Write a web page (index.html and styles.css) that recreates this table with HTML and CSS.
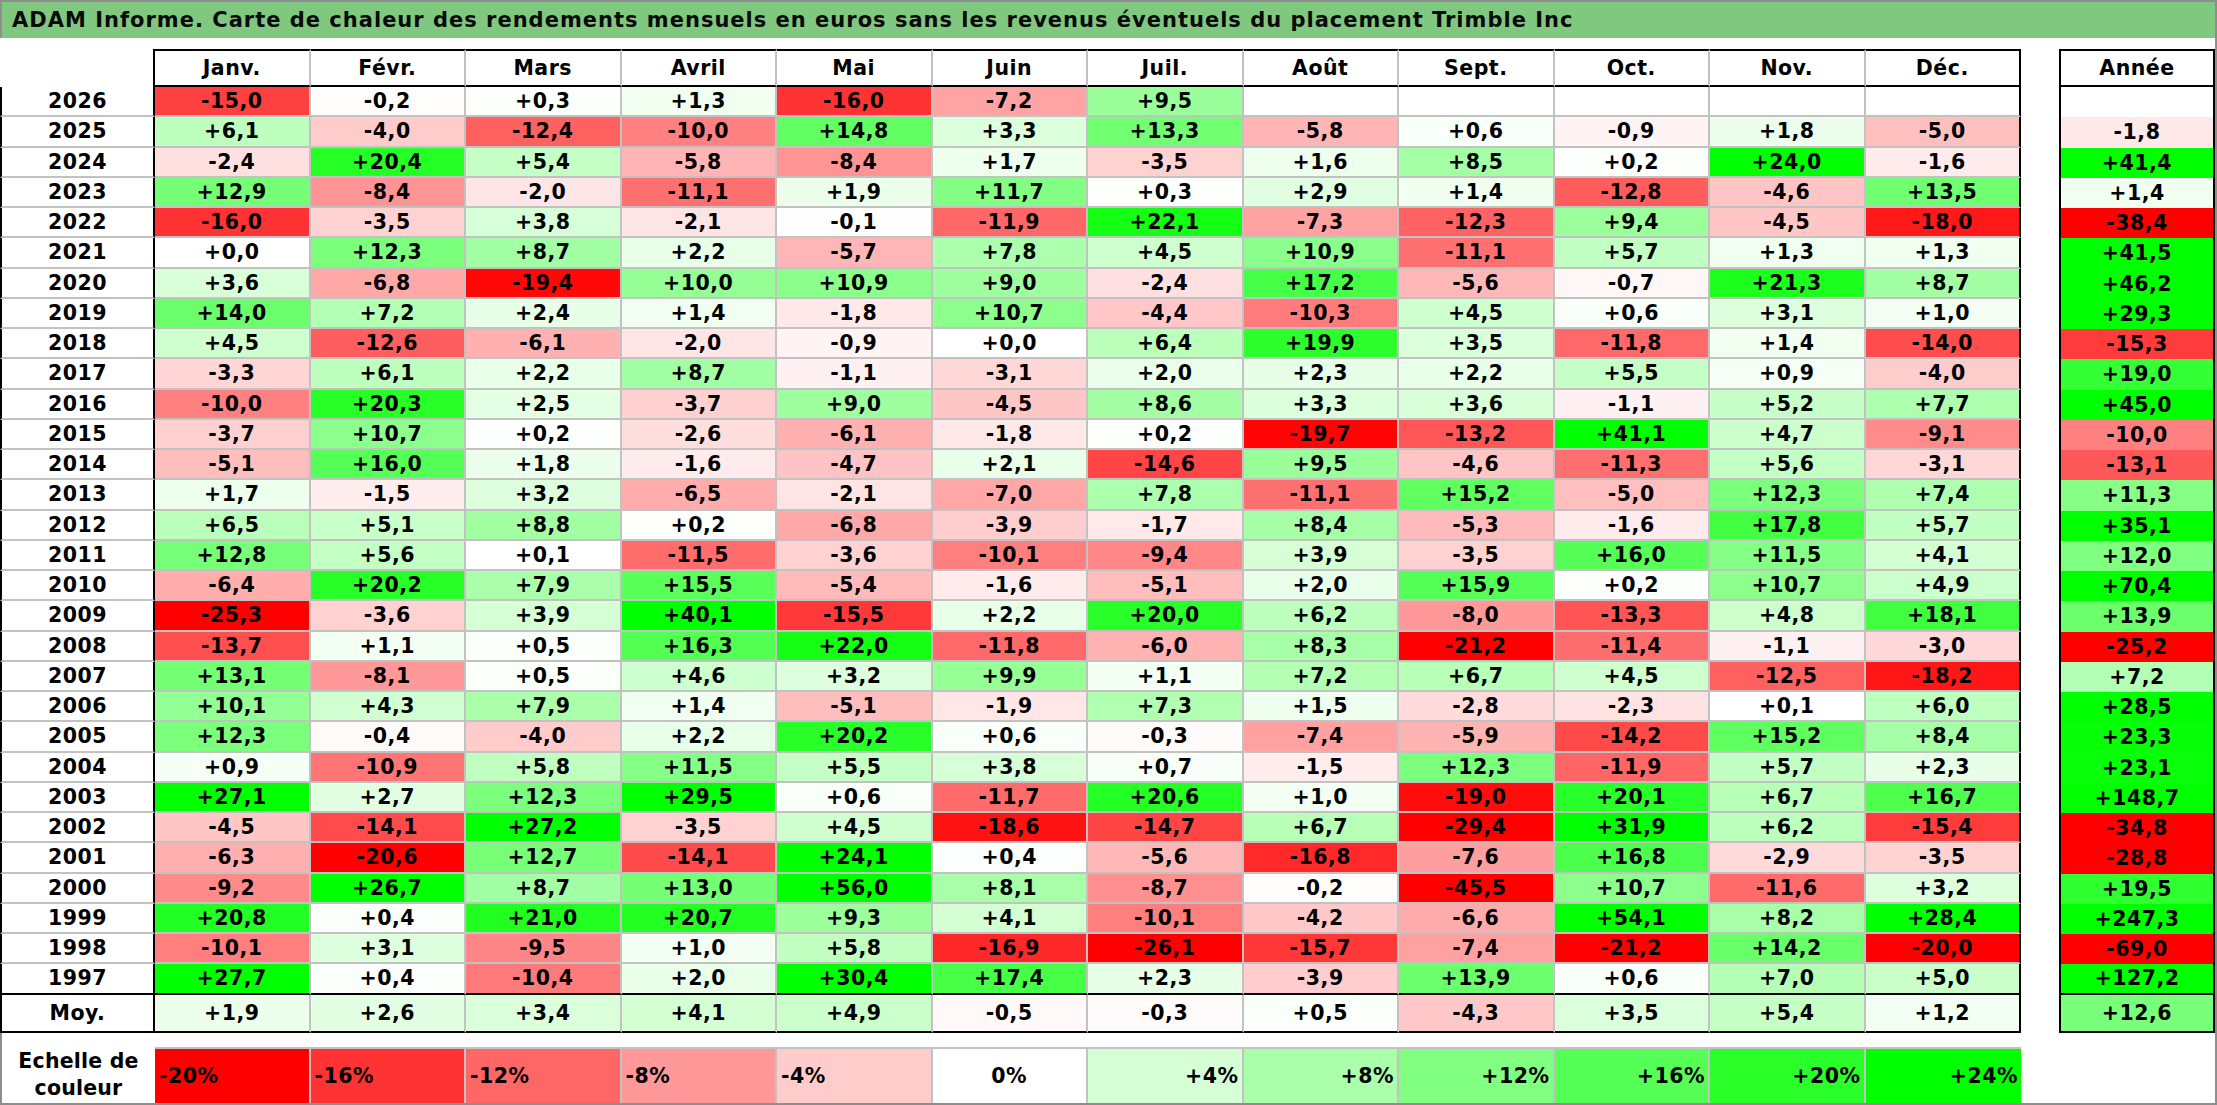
FILE: index.html
```html
<!DOCTYPE html>
<html lang="fr">
<head>
<meta charset="utf-8">
<title>ADAM Informe - Trimble Inc</title>
<link rel="stylesheet" href="styles.css">
</head>
<body>
<div class="sheet">
  <div class="title">ADAM Informe. Carte de chaleur des rendements mensuels en euros sans les revenus éventuels du placement Trimble Inc</div>
  <table class="heat">
    <colgroup>
      <col class="c-year">
      <col class="c-month" span="12">
      <col class="c-gap">
      <col class="c-total">
    </colgroup>
    <thead>
      <tr class="r-head">
        <th class="corner"></th>
        <th class="mh">Janv.</th>
        <th class="mh">Févr.</th>
        <th class="mh">Mars</th>
        <th class="mh">Avril</th>
        <th class="mh">Mai</th>
        <th class="mh">Juin</th>
        <th class="mh">Juil.</th>
        <th class="mh">Août</th>
        <th class="mh">Sept.</th>
        <th class="mh">Oct.</th>
        <th class="mh">Nov.</th>
        <th class="mh dec">Déc.</th>
        <th class="gap"></th>
        <th class="th-total">Année</th>
      </tr>
    </thead>
    <tbody id="rows"></tbody>
  </table>
</div>
<script src="script.js"></script>
</body>
</html>
```
FILE: styles.css
```css
* {
  box-sizing: border-box;
}

body {
  margin: 0;
  background: #ffffff;
}

.sheet {
  width: 2217px;
  height: 1105px;
  border: 2px solid #8e8e8e;
  border-left: 0;
  overflow: hidden;
  font-family: "DejaVu Sans", "Noto Sans", sans-serif;
  font-weight: bold;
  color: #000000;
  background: #ffffff;
}

.title {
  height: 36px;
  background: #80c880;
  border-left: 2px solid #8e8e8e;
  padding-left: 10px;
  font-size: 21px;
  letter-spacing: 1px;
  line-height: 36px;
  white-space: nowrap;
  color: #0a0a0a;
}

.heat {
  margin-top: 11px;
  border-collapse: separate;
  border-spacing: 0;
  table-layout: fixed;
  width: 2215px;
  font-size: 20.5px;
  letter-spacing: 0.5px;
}

.c-year { width: 155px; }
.c-month { width: 155.5px; }
.c-gap { width: 38px; }
.c-total { width: 156px; }

.heat th,
.heat td {
  padding: 0;
  text-align: center;
  vertical-align: middle;
  white-space: nowrap;
  overflow: hidden;
  font-weight: bold;
}

.r-head { height: 38px; }
.r-data { height: 30.25px; }
.r-moy { height: 38px; }
.r-space { height: 14px; }
.r-scale { height: 56.5px; }

/* header */
.corner {
  border-right: 2px solid #000;
}
.mh {
  border-top: 2px solid #000;
  border-bottom: 2px solid #000;
  border-right: 2px solid #c2c2c2;
}
.mh.dec {
  border-right: 2px solid #000;
}
.th-total {
  border: 2px solid #000;
}

/* body cells */
.yr {
  border-left: 2px solid #000;
  border-right: 2px solid #000;
  border-bottom: 2px solid #c2c2c2;
  background: #ffffff;
}
.mo {
  border-right: 2px solid #c2c2c2;
  border-bottom: 2px solid #c2c2c2;
  background: #ffffff;
}
.mo.dec {
  border-right: 2px solid #000;
}
.tot {
  border-left: 2px solid #000;
  border-right: 2px solid #000;
  background: #ffffff;
}

.r-last .yr,
.r-last .mo,
.r-last .tot {
  border-bottom: 2px solid #000;
}

.r-moy .yr,
.r-moy .mo,
.r-moy .tot {
  border-bottom: 2px solid #000;
}

/* scale */
.frame-l {
  border-left: 2px solid #8e8e8e;
}
.scale-label {
  border-left: 2px solid #8e8e8e;
  line-height: 27px;
  letter-spacing: 0.2px;
}
.sc {
  border-top: 2px solid #c2c2c2;
  border-right: 2px solid #c2c2c2;
}
.sc.last {
  border-right: 0;
}
.heat td.sc-neg {
  text-align: left;
  padding-left: 4px;
}
.heat td.sc-pos {
  text-align: right;
  padding-right: 3px;
}
```
FILE: script.js
```js
var DATA = [
  "2026|-15,0 -0,2 +0,3 +1,3 -16,0 -7,2 +9,5 . . . . .|.",
  "2025|+6,1 -4,0 -12,4 -10,0 +14,8 +3,3 +13,3 -5,8 +0,6 -0,9 +1,8 -5,0|-1,8",
  "2024|-2,4 +20,4 +5,4 -5,8 -8,4 +1,7 -3,5 +1,6 +8,5 +0,2 +24,0 -1,6|+41,4",
  "2023|+12,9 -8,4 -2,0 -11,1 +1,9 +11,7 +0,3 +2,9 +1,4 -12,8 -4,6 +13,5|+1,4",
  "2022|-16,0 -3,5 +3,8 -2,1 -0,1 -11,9 +22,1 -7,3 -12,3 +9,4 -4,5 -18,0|-38,4",
  "2021|+0,0 +12,3 +8,7 +2,2 -5,7 +7,8 +4,5 +10,9 -11,1 +5,7 +1,3 +1,3|+41,5",
  "2020|+3,6 -6,8 -19,4 +10,0 +10,9 +9,0 -2,4 +17,2 -5,6 -0,7 +21,3 +8,7|+46,2",
  "2019|+14,0 +7,2 +2,4 +1,4 -1,8 +10,7 -4,4 -10,3 +4,5 +0,6 +3,1 +1,0|+29,3",
  "2018|+4,5 -12,6 -6,1 -2,0 -0,9 +0,0 +6,4 +19,9 +3,5 -11,8 +1,4 -14,0|-15,3",
  "2017|-3,3 +6,1 +2,2 +8,7 -1,1 -3,1 +2,0 +2,3 +2,2 +5,5 +0,9 -4,0|+19,0",
  "2016|-10,0 +20,3 +2,5 -3,7 +9,0 -4,5 +8,6 +3,3 +3,6 -1,1 +5,2 +7,7|+45,0",
  "2015|-3,7 +10,7 +0,2 -2,6 -6,1 -1,8 +0,2 -19,7 -13,2 +41,1 +4,7 -9,1|-10,0",
  "2014|-5,1 +16,0 +1,8 -1,6 -4,7 +2,1 -14,6 +9,5 -4,6 -11,3 +5,6 -3,1|-13,1",
  "2013|+1,7 -1,5 +3,2 -6,5 -2,1 -7,0 +7,8 -11,1 +15,2 -5,0 +12,3 +7,4|+11,3",
  "2012|+6,5 +5,1 +8,8 +0,2 -6,8 -3,9 -1,7 +8,4 -5,3 -1,6 +17,8 +5,7|+35,1",
  "2011|+12,8 +5,6 +0,1 -11,5 -3,6 -10,1 -9,4 +3,9 -3,5 +16,0 +11,5 +4,1|+12,0",
  "2010|-6,4 +20,2 +7,9 +15,5 -5,4 -1,6 -5,1 +2,0 +15,9 +0,2 +10,7 +4,9|+70,4",
  "2009|-25,3 -3,6 +3,9 +40,1 -15,5 +2,2 +20,0 +6,2 -8,0 -13,3 +4,8 +18,1|+13,9",
  "2008|-13,7 +1,1 +0,5 +16,3 +22,0 -11,8 -6,0 +8,3 -21,2 -11,4 -1,1 -3,0|-25,2",
  "2007|+13,1 -8,1 +0,5 +4,6 +3,2 +9,9 +1,1 +7,2 +6,7 +4,5 -12,5 -18,2|+7,2",
  "2006|+10,1 +4,3 +7,9 +1,4 -5,1 -1,9 +7,3 +1,5 -2,8 -2,3 +0,1 +6,0|+28,5",
  "2005|+12,3 -0,4 -4,0 +2,2 +20,2 +0,6 -0,3 -7,4 -5,9 -14,2 +15,2 +8,4|+23,3",
  "2004|+0,9 -10,9 +5,8 +11,5 +5,5 +3,8 +0,7 -1,5 +12,3 -11,9 +5,7 +2,3|+23,1",
  "2003|+27,1 +2,7 +12,3 +29,5 +0,6 -11,7 +20,6 +1,0 -19,0 +20,1 +6,7 +16,7|+148,7",
  "2002|-4,5 -14,1 +27,2 -3,5 +4,5 -18,6 -14,7 +6,7 -29,4 +31,9 +6,2 -15,4|-34,8",
  "2001|-6,3 -20,6 +12,7 -14,1 +24,1 +0,4 -5,6 -16,8 -7,6 +16,8 -2,9 -3,5|-28,8",
  "2000|-9,2 +26,7 +8,7 +13,0 +56,0 +8,1 -8,7 -0,2 -45,5 +10,7 -11,6 +3,2|+19,5",
  "1999|+20,8 +0,4 +21,0 +20,7 +9,3 +4,1 -10,1 -4,2 -6,6 +54,1 +8,2 +28,4|+247,3",
  "1998|-10,1 +3,1 -9,5 +1,0 +5,8 -16,9 -26,1 -15,7 -7,4 -21,2 +14,2 -20,0|-69,0",
  "1997|+27,7 +0,4 -10,4 +2,0 +30,4 +17,4 +2,3 -3,9 +13,9 +0,6 +7,0 +5,0|+127,2"
];
var MOY = "Moy.|+1,9 +2,6 +3,4 +4,1 +4,9 -0,5 -0,3 +0,5 -4,3 +3,5 +5,4 +1,2|+12,6";

function colour(v) {
  var t, c;
  if (v < 0) {
    t = Math.min(1, -v / 20);
    c = Math.round(255 * (1 - t));
    return "rgb(255," + c + "," + c + ")";
  }
  t = Math.min(1, v / 24);
  c = Math.round(255 * (1 - t));
  return "rgb(" + c + ",255," + c + ")";
}

function num(s) {
  return parseFloat(s.replace(",", "."));
}

function cell(tr, cls, text, value) {
  var td = document.createElement("td");
  td.className = cls;
  if (text !== null) {
    td.textContent = text;
  }
  if (value !== null) {
    td.style.background = colour(value);
  }
  tr.appendChild(td);
  return td;
}

function buildRow(line, rowClass) {
  var parts = line.split("|");
  var tr = document.createElement("tr");
  tr.className = rowClass;
  cell(tr, "yr", parts[0], null);
  var vals = parts[1].split(" ");
  for (var i = 0; i < 12; i++) {
    var s = vals[i];
    var cls = "mo" + (i === 11 ? " dec" : "");
    if (s === ".") {
      cell(tr, cls, null, null);
    } else {
      cell(tr, cls, s, num(s));
    }
  }
  cell(tr, "gap", null, null);
  if (parts[2] === ".") {
    cell(tr, "tot", null, null);
  } else {
    cell(tr, "tot", parts[2], num(parts[2]));
  }
  return tr;
}

var body = document.getElementById("rows");
for (var r = 0; r < DATA.length; r++) {
  body.appendChild(buildRow(DATA[r], "r-data" + (r === DATA.length - 1 ? " r-last" : "")));
}
body.appendChild(buildRow(MOY, "r-moy"));

var sp = document.createElement("tr");
sp.className = "r-space";
cell(sp, "frame-l", null, null);
var rest = cell(sp, "", null, null);
rest.colSpan = 14;
body.appendChild(sp);

var sc = document.createElement("tr");
sc.className = "r-scale";
var lab = cell(sc, "scale-label", null, null);
lab.appendChild(document.createTextNode("Echelle de"));
lab.appendChild(document.createElement("br"));
lab.appendChild(document.createTextNode("couleur"));
for (var k = 0; k < 12; k++) {
  var v = -20 + 4 * k;
  var label = (v > 0 ? "+" : "") + v + "%";
  var cls = "sc " + (v < 0 ? "sc-neg" : (v > 0 ? "sc-pos" : "sc-zero")) + (k === 11 ? " last" : "");
  cell(sc, cls, label, v);
}
cell(sc, "gap", null, null);
cell(sc, "gap", null, null);
body.appendChild(sc);
```
